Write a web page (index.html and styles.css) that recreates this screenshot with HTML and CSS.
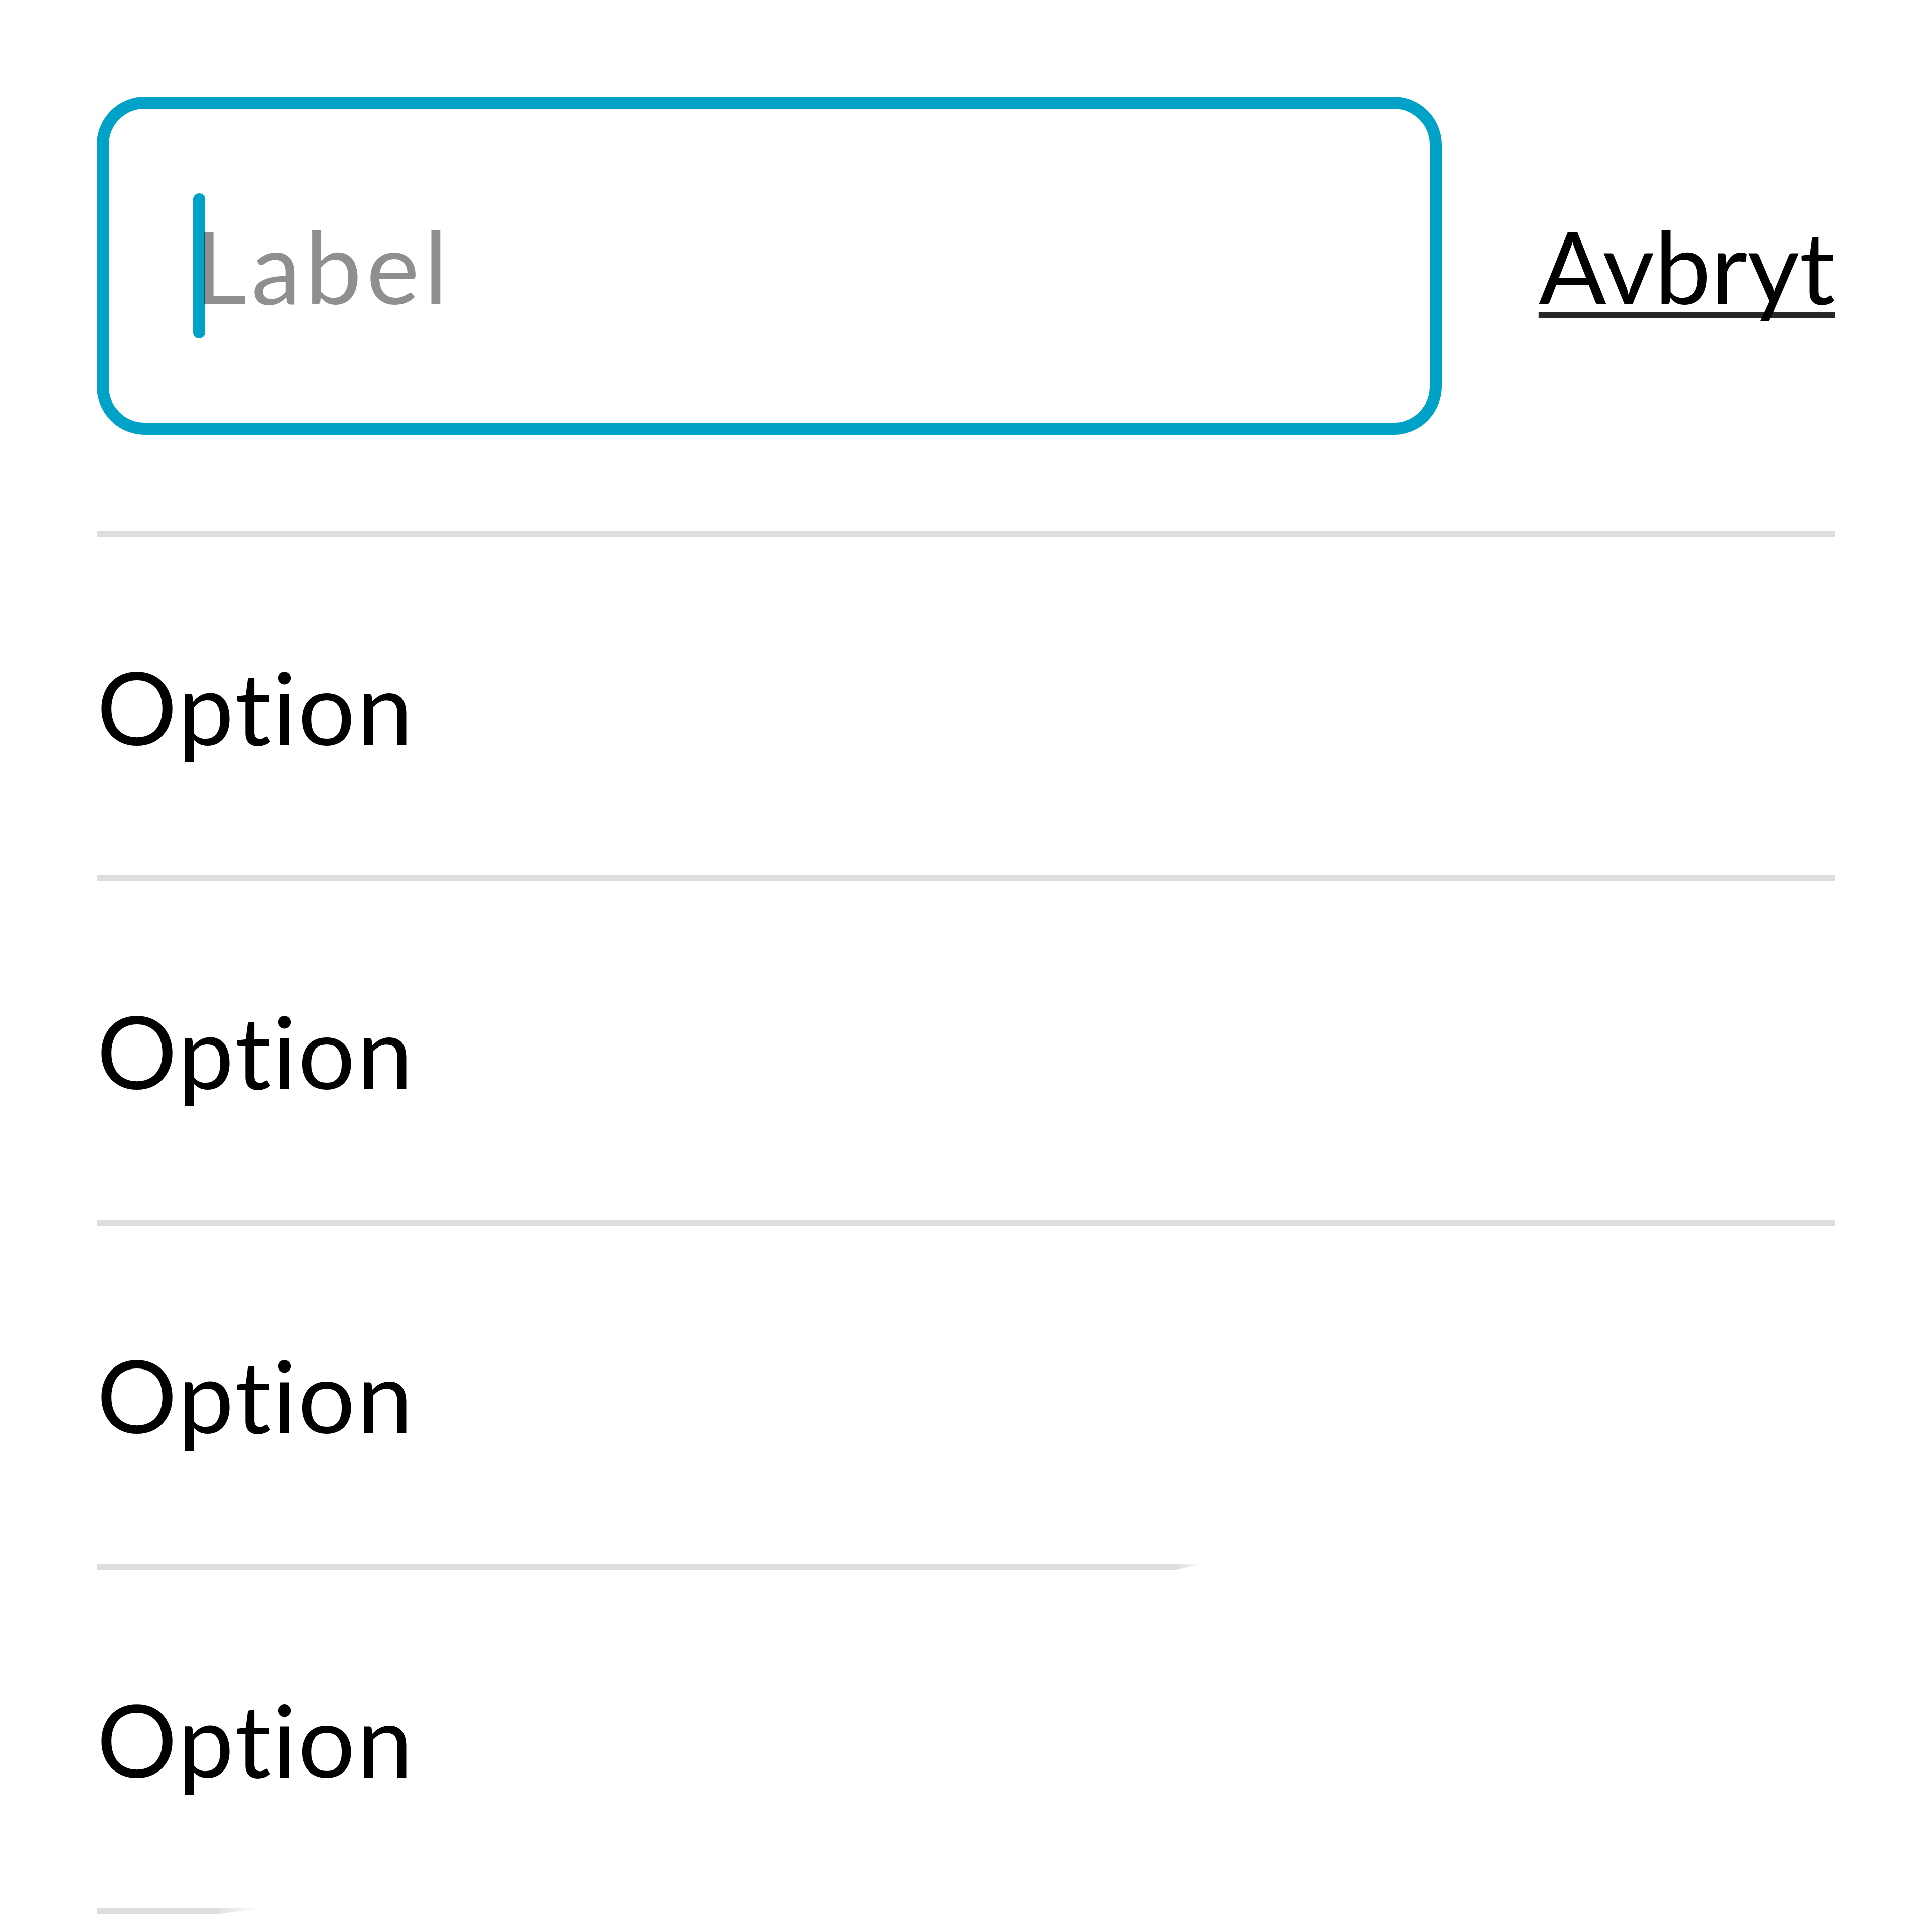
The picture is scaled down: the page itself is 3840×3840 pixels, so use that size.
FILE: index.html
```html
<!DOCTYPE html>
<html lang="sv">
<head>
<meta charset="utf-8">
<title>Sök</title>
<link rel="stylesheet" href="styles.css">
</head>
<body>
<div class="screen">
  <div class="search-bar">
    <div class="field">
      <span class="caret"></span>
      <span class="placeholder">Label</span>
    </div>
    <a class="cancel" href="#">Avbryt</a>
  </div>
  <div class="list">
    <div class="rule"></div>
    <div class="option">Option</div>
    <div class="rule"></div>
    <div class="option">Option</div>
    <div class="rule"></div>
    <div class="option">Option</div>
    <div class="rule rule-fade-long"></div>
    <div class="option">Option</div>
    <div class="rule rule-fade-short"></div>
  </div>
</div>
</body>
</html>
```

FILE: styles.css
```css
html, body {
  margin: 0;
  padding: 0;
  background: #ffffff;
}

body {
  font-family: Lato, "Open Sans", "Liberation Sans", sans-serif;
  font-variant-ligatures: none;
  font-feature-settings: "liga" 0, "clig" 0;
  color: #000000;
}

.screen {
  padding: 192px 192px 0 192px;
}

.search-bar {
  display: flex;
  align-items: center;
  gap: 192px;
  margin-bottom: 192px;
}

.field {
  flex: 1 1 auto;
  box-sizing: border-box;
  height: 672px;
  border: 24px solid #00a3c7;
  border-radius: 96px;
  display: flex;
  align-items: center;
  padding-left: 168px;
}

.caret {
  flex: none;
  width: 24px;
  height: 288px;
  border-radius: 12px;
  background: #00a3c7;
}

.placeholder {
  margin-left: -21px;
  font-size: 200px;
  line-height: 1;
  letter-spacing: 9px;
  color: rgba(0, 0, 0, 0.44);
}

.cancel {
  flex: none;
  font-size: 200px;
  line-height: 1;
  color: #000000;
  text-decoration: underline;
  text-decoration-thickness: 12px;
  text-underline-offset: 16px;
  text-decoration-skip-ink: none;
  text-decoration-color: #262626;
}

.list {
  display: flex;
  flex-direction: column;
}

.rule {
  height: 12px;
  background: #dddddd;
}

.rule-fade-long {
  width: 63.7%;
  background: linear-gradient(to right, #dddddd calc(100% - 56px), rgba(221, 221, 221, 0));
  clip-path: polygon(0 0, 100% 0, calc(100% - 56px) 100%, 0 100%);
}

.rule-fade-short {
  width: 9.7%;
  background: linear-gradient(to right, #dddddd calc(100% - 100px), rgba(221, 221, 221, 0));
  clip-path: polygon(0 0, 100% 0, calc(100% - 90px) 100%, 0 100%);
}

.option {
  height: 672px;
  display: flex;
  align-items: center;
  font-size: 200px;
  line-height: 1;
  letter-spacing: 3px;
}
```
